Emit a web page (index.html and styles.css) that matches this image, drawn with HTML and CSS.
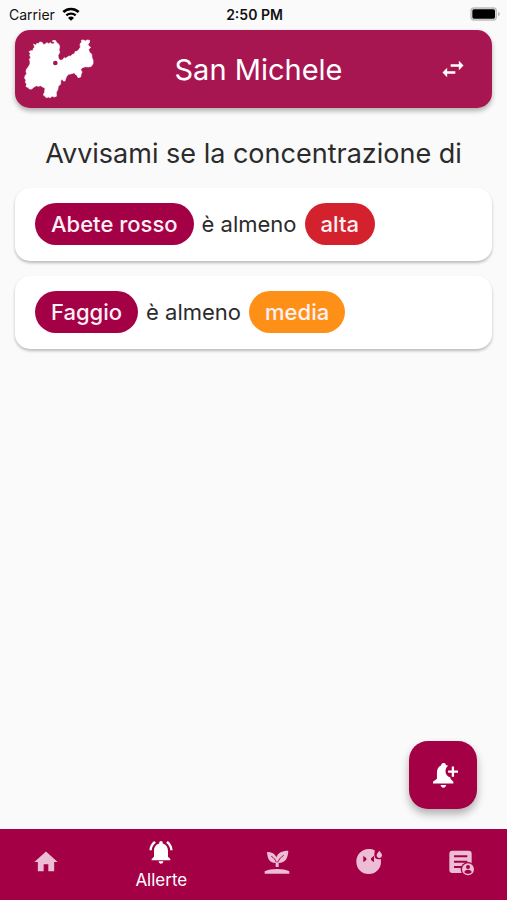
FILE: index.html
```html
<!DOCTYPE html>
<html lang="it">
<head>
  <meta charset="UTF-8" />
  <meta name="viewport" content="width=device-width, initial-scale=1.0"/>
  <title>Allerte – San Michele</title>
  <link rel="stylesheet" href="styles.css">
</head>
<body>

  <!-- Status bar -->
  <div class="status-bar">
    <div class="status-left">
      <span>Carrier</span>
      <svg class="wifi" viewBox="0 0 54 42" aria-hidden="true">
        <path d="M4 15a34 34 0 0 1 46 0" fill="none" stroke="#000" stroke-width="8"/>
        <path d="M13 25a21 21 0 0 1 28 0" fill="none" stroke="#000" stroke-width="7"/>
        <path d="M18 33a13 13 0 0 1 18 0l-9 8z"/>
      </svg>
    </div>
    <div class="status-time">2:50 PM</div>
    <div class="status-right">
      <svg class="battery" viewBox="0 0 90 42" aria-hidden="true">
        <rect x="1" y="1" width="80" height="40" rx="11" fill="#bdbdbd"/>
        <rect x="5" y="5" width="72" height="32" rx="7" fill="#e2e2e0"/>
        <rect x="7" y="7" width="68" height="28" rx="5"/>
        <path d="M84 14q6 3 6 7t-6 7z" fill="#bdbdbd"/>
      </svg>
    </div>
  </div>

  <!-- Station -->
  <header class="station">
    <svg class="station-map" viewBox="29 28 210 180" aria-hidden="true">
      <path d="M58 43L63 47 68 41 73 42 76 37 83 38 88 45 94 42 98 39 103 42 108 39 113 43 119 42 121 38 114 35 116 32 124 33 127 39 133 43 136 51 134 60 136 68 131 78 133 88 139 92 146 90 149 84 154 86 164 79 168 80 175 74 181 72 182 66 188 65 193 60 198 53 197 43 202 37 201 32 207 31 213 34 218 31 226 32 225 39 221 44 224 50 229 53 223 59 225 67 232 74 233 84 236 92 236 102 231 110 222 112 213 111 204 114 199 120 203 127 200 135 199 142 191 144 188 137 183 134 180 129 172 132 163 134 158 138 155 144 152 154 147 154 144 148 139 153 139 163 132 170 130 180 126 188 126 200 119 202 113 199 108 204 102 202 96 204 90 198 87 196 91 187 92 175 85 172 79 168 72 170 66 168 59 172 52 178 45 178 41 173 35 171 37 163 33 158 35 151 31 146 32 139 37 132 35 125 37 118 42 112 47 103 47 94 45 89 49 84 46 76 48 71 44 66 50 63 56 63 57 56 61 53z" fill="#fff" stroke="#fff" stroke-width="2" stroke-linejoin="round"/>
      <circle cx="123" cy="100" r="7" fill="#a81652"/>
    </svg>
    <h1>San Michele</h1>
    <button class="swap-button" aria-label="Cambia stazione">
      <svg class="icon" viewBox="0 0 24 24"><path d="M6.99 11L3 15l3.99 4v-3H14v-2H6.99v-3zM21 9l-3.99-4v3H10v2h7.01v3L21 9z"/></svg>
    </button>
  </header>

  <!-- Alerts -->
  <main>
    <h2>Avvisami se la concentrazione di</h2>
    <div class="alert-card">
      <span class="pill plant">Abete rosso</span>
      <span>è almeno</span>
      <span class="pill high">alta</span>
    </div>
    <div class="alert-card">
      <span class="pill plant">Faggio</span>
      <span>è almeno</span>
      <span class="pill medium">media</span>
    </div>
  </main>

  <button class="add-button" aria-label="Aggiungi allerta">
    <svg class="add-icon" viewBox="108 99 76 76">
      <path d="M140 99c-5 0-7 3-7 7-9 4-13 12-13 22v19l-12 9v5h62v-5l-9-9v-4c-10-3-15-10-15-19 0-8 3-13 8-17l-7-2c0-4-3-6-7-6zM131 166h17c-1 5-4 8-8 8s-8-3-9-8z"/>
      <path d="M165 110h7v12h12v7h-12v12h-7v-12h-11v-7h11z"/>
    </svg>
  </button>

  <!-- Bottom navigation -->
  <nav class="bottom-nav">
    <a href="#home" aria-label="Home">
      <svg class="icon" viewBox="0 0 24 24"><path d="M10 20v-6h4v6h5v-8h3L12 3 2 12h3v8z"/></svg>
    </a>
    <a href="#allerte" class="active">
      <svg class="icon" viewBox="0 0 24 24"><path d="M7.58 4.08L6.15 2.65C3.75 4.48 2.17 7.3 2.03 10.5h2c.15-2.65 1.51-4.97 3.55-6.42zm12.39 6.42h2c-.15-3.2-1.73-6.02-4.12-7.85l-1.42 1.43c2.02 1.45 3.39 3.77 3.54 6.42zM18 11c0-3.07-1.64-5.64-4.5-6.32V4c0-.83-.67-1.5-1.5-1.5s-1.5.67-1.5 1.5v.68C7.63 5.36 6 7.92 6 11v5l-2 2v1h16v-1l-2-2v-5zm-6 11c.14 0 .27-.01.4-.04.65-.14 1.18-.58 1.44-1.18.1-.24.15-.5.15-.78h-4c.01 1.1.9 2 2.01 2z"/></svg>
      <span>Allerte</span>
    </a>
    <a href="#piante" aria-label="Piante">
      <svg class="icon" viewBox="0 0 84 84">
        <path d="M5 77v-7c10-5 22-7 37-7s27 2 37 7v7z"/>
        <path d="M38 57V45c-17 0-25-11-26-33 14 0 24 5 28 16 4-13 16-20 36-20-1 23-9 36-29 37v12z"/>
        <path d="M25 25c7 4 12 10 15 18M62 22c-8 5-14 12-18 21" fill="none" stroke="#a40046" stroke-width="3"/>
      </svg>
    </a>
    <a href="#sintomi" aria-label="Sintomi">
      <svg class="icon" viewBox="0 0 84 84">
        <path d="M60 8C54 4 48 3 41 3 20 3 4 20 4 41s16 37 37 37 37-16 37-37c0-3 0-5-1-8-11 3-19-2-19-12 0-4 0-8 2-13z"/>
        <path d="M73 8c5 6 8 10 8 14 0 5-4 8-8 8s-8-3-8-8c0-4 3-8 8-14z"/>
        <path d="M25 23l9 8v5l-9 7zM57 23l-9 8v5l9 7z" fill="#a40046"/>
      </svg>
    </a>
    <a href="#profilo" aria-label="Profilo">
      <svg class="icon" viewBox="0 0 84 84">
        <rect x="7" y="8" width="67" height="67" rx="9"/>
        <path d="M21 25h40M21 41h40M21 57h24" fill="none" stroke="#a40046" stroke-width="6"/>
        <circle cx="63" cy="64" r="22" fill="#a40046"/>
        <circle cx="63" cy="64" r="18"/>
        <circle cx="63" cy="57" r="6" fill="#a40046"/>
        <path d="M52 73c0-5 5-8 11-8s11 3 11 8c-6 6-16 6-22 0z" fill="#a40046"/>
      </svg>
    </a>
  </nav>

</body>
</html>
```
FILE: styles.css
```css
* {
  box-sizing: border-box;
}

body {
  font-family: Inter, "Liberation Sans", sans-serif;
  margin: 0;
  min-height: 100vh;
  display: flex;
  flex-direction: column;
  background: #fafafa;
  color: #2b2b2b;
}

button {
  border: none;
  padding: 0;
  font: inherit;
  cursor: pointer;
}

.icon {
  display: block;
  width: 28px;
  height: 28px;
  fill: currentColor;
}

/* Status bar */
.status-bar {
  display: grid;
  grid-template-columns: 1fr auto 1fr;
  align-items: center;
  height: 30px;
  padding: 0 7px 2px 9px;
  font-size: 14px;
  color: #111;
}

.status-left {
  display: flex;
  align-items: center;
  gap: 7px;
}

.wifi {
  width: 18px;
  height: 14px;
}

.status-time {
  font-weight: 600;
}

.status-right {
  display: flex;
  justify-content: flex-end;
}

.battery {
  width: 30px;
  height: 14px;
}

/* Station */
.station {
  display: grid;
  grid-template-columns: 70px 1fr 60px;
  align-items: center;
  height: 78px;
  margin: 0 15px;
  padding: 0 9px;
  border-radius: 15px;
  background: #a81652;
  color: white;
  box-shadow: 0 3px 5px rgba(0, 0, 0, 0.3);
}

.station-map {
  width: 70px;
  height: 60px;
}

.station h1 {
  margin: 0;
  font-size: 29px;
  font-weight: 400;
  text-align: center;
}

.swap-button {
  justify-self: center;
  background: none;
  color: white;
}

/* Alerts */
main {
  flex: 1;
  display: flex;
  flex-direction: column;
  gap: 15px;
  padding: 27px 15px;
}

h2 {
  margin: 0;
  font-size: 27px;
  font-weight: 400;
  line-height: 38px;
  text-align: center;
}

.alert-card {
  display: flex;
  align-items: center;
  gap: 8px;
  padding: 15px 20px 16px;
  border-radius: 15px;
  background: white;
  font-size: 22px;
  box-shadow: 0 2px 3px rgba(0, 0, 0, 0.25);
}

.pill {
  padding: 0 16px;
  border-radius: 21px;
  line-height: 42px;
  font-weight: 500;
  color: #fff0f4;
}

.plant {
  background: #a40046;
}

.high {
  background: #d3222d;
}

.medium {
  background: #ff9017;
}

.add-button {
  position: fixed;
  right: 30px;
  bottom: 91px;
  display: flex;
  align-items: center;
  justify-content: center;
  width: 68px;
  height: 68px;
  padding-left: 4px;
  border-radius: 19px;
  background: #a40046;
  box-shadow: 0 5px 9px rgba(0, 0, 0, 0.3);
}

.add-icon {
  width: 25px;
  height: 25px;
  fill: white;
}

/* Bottom navigation */
.bottom-nav {
  position: sticky;
  bottom: 0;
  display: grid;
  grid-template-columns: 2fr 3fr 2fr 2fr 2fr;
  height: 71px;
  padding-bottom: 6px;
  background: #a40046;
}

.bottom-nav a {
  display: flex;
  flex-direction: column;
  align-items: center;
  justify-content: center;
  color: #edbdd5;
  font-size: 17px;
  line-height: 24px;
  text-decoration: none;
}

.bottom-nav .active {
  justify-content: flex-start;
  gap: 2px;
  padding-top: 9px;
  color: white;
}
```
